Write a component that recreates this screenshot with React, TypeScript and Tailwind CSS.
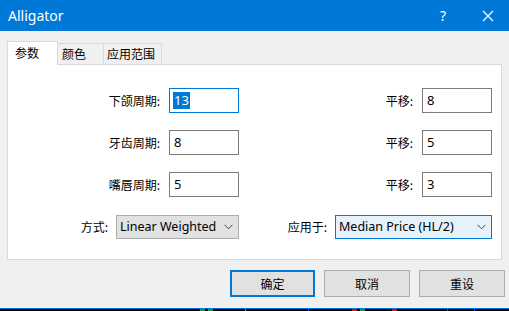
import React from "react";

const cjk = "font-['Noto_Sans_CJK_SC','Noto_Sans',sans-serif]";

const Chevron = () => (
  <svg width="9" height="6" viewBox="0 0 9 6" className="shrink-0">
    <path d="M0.5 0.8 L4.5 4.8 L8.5 0.8" fill="none" stroke="#444" strokeWidth="1" />
  </svg>
);

const Field = ({ value, focused }: { value: string; focused?: boolean }) => (
  <div
    className={`flex h-[25px] w-[70px] items-center border bg-white pl-[3px] text-[13px] text-black ${
      focused ? "border-[#0078d7]" : "border-[#7a7a7a]"
    }`}
  >
    {focused ? (
      <span className="bg-[#0078d7] px-px leading-[17px] text-white">{value}</span>
    ) : (
      <span className="pl-px">{value}</span>
    )}
  </div>
);

const Label = ({ text }: { text: string }) => (
  <span className={`${cjk} text-[12px] text-black`}>{text}</span>
);

const rows = [
  { name: "下颌周期:", period: "13", shift: "8", focused: true },
  { name: "牙齿周期:", period: "8", shift: "5" },
  { name: "嘴唇周期:", period: "5", shift: "3" },
];

export default function App() {
  return (
    <div className="flex h-[311px] w-[509px] flex-col overflow-hidden bg-black font-['Noto_Sans',sans-serif]">
      <div className="flex h-[31px] shrink-0 items-center bg-[#0078d7] pl-[8px] text-white">
        <span className="text-[14px]">Alligator</span>
        <span className="ml-auto mr-[36px] text-[14px]">?</span>
        <svg width="12" height="12" viewBox="0 0 12 12" className="mr-[15px]">
          <path d="M1 1 L11 11 M11 1 L1 11" stroke="white" strokeWidth="1.2" />
        </svg>
      </div>
      <div className="flex h-[277px] shrink-0 flex-col bg-[#f0f0f0] px-[7px] pt-[9px]">
        <div className={`${cjk} flex h-[24px] items-end text-[12px] text-black`}>
          <div className="relative z-10 -mb-px flex h-[24px] w-[51px] items-start border border-b-0 border-[#d9d9d9] bg-white pl-[7px] pt-[2px]">
            参数
          </div>
          <div className="flex h-[21px] w-[46px] items-start border border-l-0 border-b-0 border-[#d9d9d9] pl-[4px] pt-px">
            颜色
          </div>
          <div className="flex h-[21px] w-[58px] items-start border border-l-0 border-b-0 border-[#d9d9d9] pl-[3px] pt-px">
            应用范围
          </div>
        </div>
        <div className="flex h-[196px] w-[495px] flex-col gap-[17px] border border-[#d9d9d9] bg-white pt-[23px]">
          {rows.map((r) => (
            <div key={r.name} className="flex items-center">
              <div className="flex w-[231px] items-center justify-end gap-[9px]">
                <Label text={r.name} />
                <Field value={r.period} focused={r.focused} />
              </div>
              <div className="flex flex-1 items-center justify-end gap-[9px] pr-[9px]">
                <Label text="平移:" />
                <Field value={r.shift} />
              </div>
            </div>
          ))}
          <div className="mt-px flex items-center">
            <div className="flex w-[231px] items-center justify-end gap-[8px]">
              <Label text="方式:" />
              <div className="flex h-[24px] w-[123px] items-center justify-between border border-[#adadad] bg-[#e1e1e1] pl-[3px] pr-[5px] text-[12.5px] text-black">
                <span>Linear Weighted</span>
                <Chevron />
              </div>
            </div>
            <div className="flex flex-1 items-center justify-end gap-[8px] pr-[9px]">
              <Label text="应用于:" />
              <div className="flex h-[24px] w-[157px] items-center justify-between border border-[#0078d7] bg-[#e5f1fb] pl-[3px] pr-[5px] text-[12.5px] text-black">
                <span>Median Price (HL/2)</span>
                <Chevron />
              </div>
            </div>
          </div>
        </div>
        <div className={`${cjk} mt-[10px] flex justify-end gap-[9px] text-[12px] text-black`}>
          <button className="flex h-[27px] w-[85px] items-center justify-center border-2 border-[#0078d7] bg-[#e1e1e1]">
            确定
          </button>
          <button className="flex h-[27px] w-[86px] items-center justify-center border border-[#adadad] bg-[#e1e1e1]">
            取消
          </button>
          <button className="-mr-[3px] flex h-[27px] w-[86px] items-center justify-center border border-[#adadad] bg-[#e1e1e1]">
            重设
          </button>
        </div>
      </div>
      <div className="h-px shrink-0 bg-[#0078d7]" />
      <div className="relative h-[2px] shrink-0">
        <div className="absolute left-[200px] h-[2px] w-[5px] bg-[#1a9a3a]" />
        <div className="absolute left-[208px] h-[2px] w-[5px] bg-[#1a9a3a]" />
        <div className="absolute left-[245px] h-[2px] w-px bg-[#00ff00]" />
        <div className="absolute left-[308px] h-[2px] w-px bg-[#0044ff]" />
        <div className="absolute left-[352px] h-[2px] w-[5px] bg-[#ff0000]" />
        <div className="absolute left-[360px] h-[2px] w-[5px] bg-[#1a9a3a]" />
        <div className="absolute left-[392px] h-[2px] w-[5px] bg-[#ff0000]" />
        <div className="absolute left-[447px] h-[2px] w-px bg-[#ff0000]" />
        <div className="absolute left-[474px] h-[2px] w-px bg-[#0044ff]" />
      </div>
    </div>
  );
}
